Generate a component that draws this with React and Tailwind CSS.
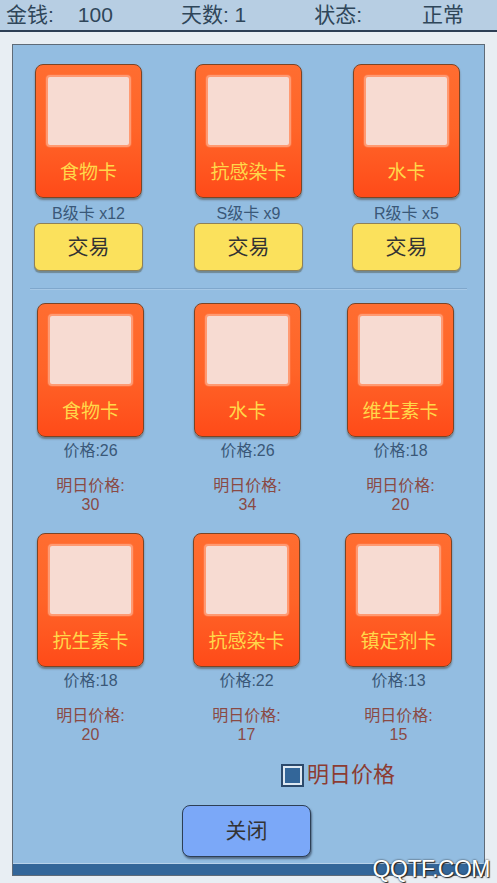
import React from "react";

const FONT = { fontFamily: '"Liberation Sans", "Noto Sans CJK SC", sans-serif' };

function Card({ name }) {
  return (
    <div className="w-[107px] h-[134px] rounded-[8px] border-[1.5px] border-[#7a4526] bg-gradient-to-b from-[#ff6d30] via-[#ff6428] to-[#ff4a18] shadow-[0_2px_2px_rgba(60,40,20,0.45)] flex flex-col items-center shrink-0">
      <div className="mt-[10px] w-[85px] h-[72px] rounded-[4px] bg-[#f7dbd2] border-[2px] border-[#ff9a72] shadow-[0_0_0_1px_rgba(255,120,70,0.6)]" />
      <div className="mt-[13px] text-[19px] leading-[26px] text-[#ffd84a]">{name}</div>
    </div>
  );
}

function TopItem({ name, grade }) {
  return (
    <div className="flex flex-col items-center w-[109px]">
      <Card name={name} />
      <div className="mt-[7px] text-[16px] leading-[18px] text-[#3a5878]">{grade}</div>
      <button className="w-[109px] h-[48px] rounded-[6px] bg-[#fbe15c] border border-[#8e8058] shadow-[0_2px_1px_rgba(70,70,50,0.45)] text-[21px] text-[#333]">
        交易
      </button>
    </div>
  );
}

function PriceItem({ name, price, tomorrow }) {
  return (
    <div className="flex flex-col items-center w-[107px]">
      <Card name={name} />
      <div className="mt-[4px] text-[16px] leading-[20px] text-[#3a5878]">价格:{price}</div>
      <div className="mt-[15px] text-[16px] leading-[19px] text-[#8a4a44]">明日价格:</div>
      <div className="text-[16px] leading-[19px] text-[#8a4a44]">{tomorrow}</div>
    </div>
  );
}

export default function App() {
  return (
    <div className="relative w-[497px] h-[883px] bg-[#e8eef3] overflow-hidden" style={FONT}>
      {/* Header */}
      <div className="h-[32px] bg-[#b7cee3] border-b-[2px] border-[#2d3f55] flex items-center text-[21px] text-[#2f4659]">
        <span className="ml-[6px]">金钱:</span>
        <span className="ml-[24px]">100</span>
        <span className="ml-[68px]">天数: 1</span>
        <span className="ml-[68px]">状态:</span>
        <span className="ml-[60px]">正常</span>
      </div>

      {/* Panel */}
      <div className="mt-[12px] mx-[12px] h-[832px] border border-[#5e6b78] bg-[#93bde1] flex flex-col">
        <div className="flex-1 flex flex-col">
          {/* Top row */}
          <div className="flex pt-[19px] pl-[21px]">
            <TopItem name="食物卡" grade="B级卡 x12" />
            <div className="ml-[51px]"><TopItem name="抗感染卡" grade="S级卡 x9" /></div>
            <div className="ml-[49px]"><TopItem name="水卡" grade="R级卡 x5" /></div>
          </div>

          {/* Separator */}
          <div className="mt-[17px] mx-[17px] h-[2px] bg-[#7fa7cc] border-b border-[#a6c8e6]" />

          {/* Row 2 */}
          <div className="flex pt-[13px] pl-[24px]">
            <PriceItem name="食物卡" price="26" tomorrow="30" />
            <div className="ml-[50px]"><PriceItem name="水卡" price="26" tomorrow="34" /></div>
            <div className="ml-[46px]"><PriceItem name="维生素卡" price="18" tomorrow="20" /></div>
          </div>

          {/* Row 3 */}
          <div className="flex pt-[19px] pl-[24px]">
            <PriceItem name="抗生素卡" price="18" tomorrow="20" />
            <div className="ml-[49px]"><PriceItem name="抗感染卡" price="22" tomorrow="17" /></div>
            <div className="ml-[45px]"><PriceItem name="镇定剂卡" price="13" tomorrow="15" /></div>
          </div>

          {/* Checkbox */}
          <div className="mt-[18px] flex items-center pl-[268px]">
            <div className="w-[23px] h-[23px] border-[2px] border-[#2c4a6c] bg-[#dde8f2] p-[2px]">
              <div className="w-full h-full bg-[#336699]" />
            </div>
            <span className="ml-[3px] text-[22px] leading-[26px] text-[#8c3c32]">明日价格</span>
          </div>

          {/* Close button */}
          <div className="mt-[17px] pl-[169px]">
            <button className="w-[129px] h-[52px] rounded-[8px] bg-[#7ba8f8] border-[1.5px] border-[#2d3f55] shadow-[1px_2px_2px_rgba(30,40,60,0.55)] text-[21px] text-[#333]">
              关闭
            </button>
          </div>
        </div>
        <div className="h-[12px] bg-[#336699] border-t border-[#b8d2ea] shrink-0" />
      </div>

      {/* Watermark */}
      <div
        className="absolute right-[7px] top-[856px] text-[23px] leading-[26px] text-white tracking-[-0.5px]"
        style={{ fontFamily: '"Liberation Sans", sans-serif', textShadow: "0 0 2px #222, 1px 1px 1px #222" }}
      >
        QQTF.COM
      </div>
    </div>
  );
}
